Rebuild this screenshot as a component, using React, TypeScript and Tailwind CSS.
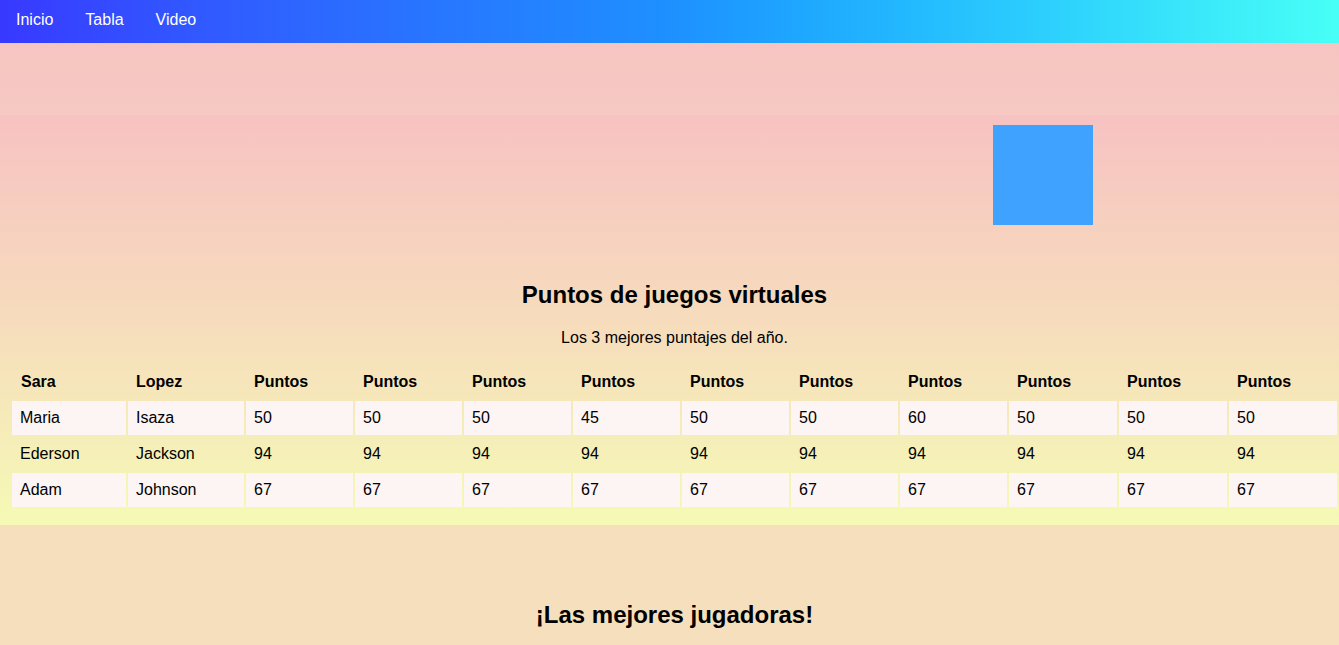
const rows = [
  ["Maria", "Isaza", "50", "50", "50", "45", "50", "50", "60", "50", "50", "50"],
  ["Ederson", "Jackson", "94", "94", "94", "94", "94", "94", "94", "94", "94", "94"],
  ["Adam", "Johnson", "67", "67", "67", "67", "67", "67", "67", "67", "67", "67"],
];

const widths = ["w-[114px] pl-[9px]", "w-[116px] pl-2", "w-[107px] pl-2", "w-[107px] pl-2", "w-[107px] pl-2", "w-[107px] pl-2", "w-[107px] pl-2", "w-[107px] pl-2", "w-[107px] pl-2", "w-[108px] pl-2", "w-[108px] pl-2", "w-[108px] pl-2"];

const headers = ["Sara", "Lopez", "Puntos", "Puntos", "Puntos", "Puntos", "Puntos", "Puntos", "Puntos", "Puntos", "Puntos", "Puntos"];

export default function App() {
  return (
    <div className="min-h-screen bg-[#f6dfbc] text-black font-['Liberation_Sans',Arial,sans-serif]">
      {/* Navigation */}
      <nav className="h-[43px] pb-[4px] flex items-center bg-gradient-to-r from-[#3838ff] via-[#1e90ff] to-[#48fff6]">
        {["Inicio", "Tabla", "Video"].map((item) => (
          <a key={item} href="#" className="px-4 text-white text-base leading-[18px]">
            {item}
          </a>
        ))}
      </nav>

      {/* Top band */}
      <header className="h-[72px] bg-gradient-to-b from-[#f6c5c1] to-[#f7c9c3]" />

      {/* Score section */}
      <section className="pt-[10px] pb-4 pl-[10px] bg-gradient-to-b from-[#f7c2c2] via-[#f6dcbc] to-[#f5fab5]">
        <div className="flex justify-end pr-[246px]">
          <div className="w-[100px] h-[100px] bg-[#3fa2ff]" />
        </div>

        <h2 className="mt-[56px] text-2xl leading-[28px] font-bold text-center">
          Puntos de juegos virtuales
        </h2>
        <p className="mt-[20px] text-base leading-[18px] text-center">
          Los 3 mejores puntajes del año.
        </p>

        <table className="mt-4 w-[1329px] table-fixed border-separate border-spacing-[2px]">
          <thead>
            <tr>
              {headers.map((h, i) => (
                <th key={i} className={`${widths[i]} py-2 pr-2 text-left font-bold leading-[18px]`}>
                  {h}
                </th>
              ))}
            </tr>
          </thead>
          <tbody>
            {rows.map((row, r) => (
              <tr key={r} className={r % 2 === 0 ? "bg-[#fdf4f4]" : ""}>
                {row.map((cell, c) => (
                  <td key={c} className="p-2 leading-[18px]">
                    {cell}
                  </td>
                ))}
              </tr>
            ))}
          </tbody>
        </table>
      </section>

      <h2 className="pt-[76px] pb-4 pl-[10px] text-2xl leading-[28px] font-bold text-center">
        ¡Las mejores jugadoras!
      </h2>
    </div>
  );
}
